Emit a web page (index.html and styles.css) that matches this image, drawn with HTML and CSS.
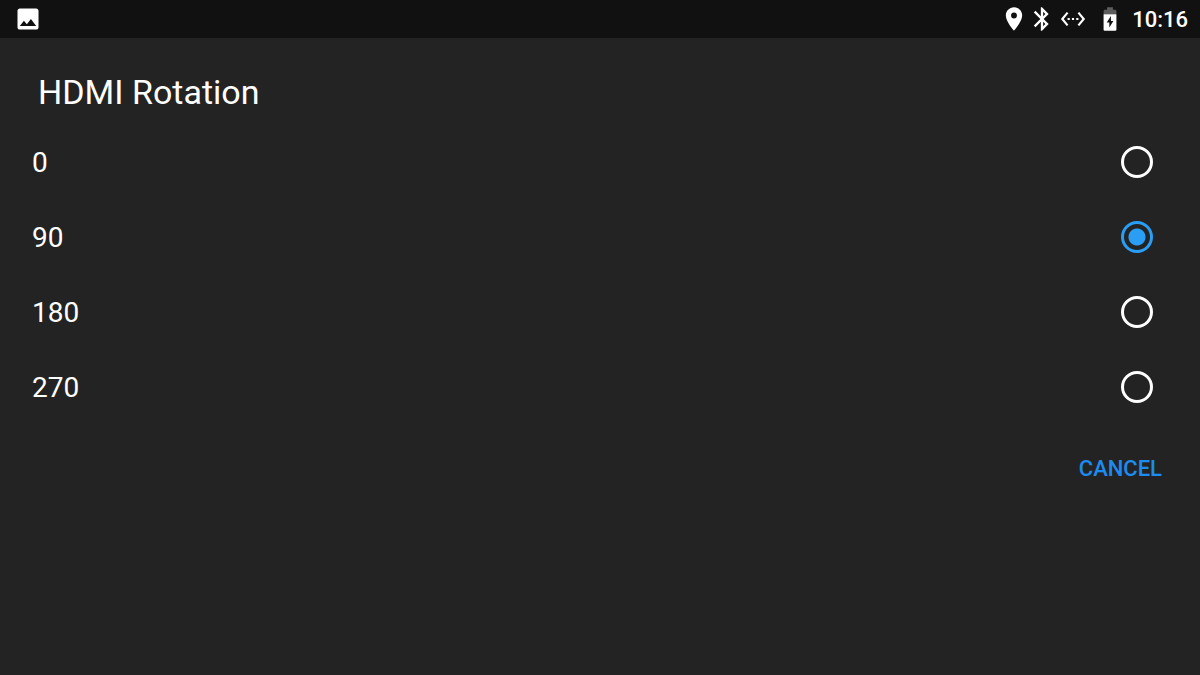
FILE: index.html
```html
<!DOCTYPE html>
<html lang="en">
<head>
<meta charset="utf-8">
<meta name="viewport" content="width=device-width, initial-scale=1">
<title>HDMI Rotation</title>
<link rel="stylesheet" href="styles.css">
</head>
<body>
<header class="status-bar">
  <svg class="icon" viewBox="0 0 24 24" role="img" aria-label="Screenshot saved"><path d="M21 19V5c0-1.100-.9-2-2-2H5c-1.100 0-2 .9-2 2v14c0 1.100.9 2 2 2h14c1.100 0 2-.9 2-2zM8.500 13.500l2.500 3.010L14.500 12l4.500 6H5l3.500-4.500z"/></svg>
  <div class="status-icons">
    <svg class="icon" viewBox="0 0 24 24" role="img" aria-label="Location"><path d="M12 2C8.130 2 5 5.130 5 9c0 5.250 7 13 7 13s7-7.750 7-13c0-3.870-3.130-7-7-7zm0 9.500a2.500 2.500 0 0 1 0-5 2.500 2.500 0 0 1 0 5z"/></svg>
    <svg class="icon" viewBox="0 0 24 24" role="img" aria-label="Bluetooth"><path d="M17.710 7.710L12 2h-1v7.590L6.410 5 5 6.410 10.590 12 5 17.590 6.410 19 11 14.410V22h1l5.710-5.710-4.300-4.290 4.300-4.290zM13 5.830l1.880 1.880L13 9.590V5.830zm1.880 10.460L13 18.170v-3.760l1.880 1.880z"/></svg>
    <svg class="icon ethernet" viewBox="0 0 24 24" role="img" aria-label="Ethernet"><path d="M7.770 6.760L6.230 5.480.82 12l5.410 6.520 1.540-1.280L3.420 12l4.350-5.240zM7 13h2v-2H7v2zm10-2h-2v2h2v-2zm-6 2h2v-2h-2v2zm6.770-7.520l-1.540 1.280L20.580 12l-4.350 5.240 1.540 1.280L23.180 12l-5.410-6.520z"/></svg>
    <svg class="icon" viewBox="0 0 24 24" role="img" aria-label="Battery charging"><path class="battery-empty" d="M16.200 4H14.500V2h-5v2H7.800C7 4 6.500 4.600 6.500 5.300V8h11V5.300C17.500 4.600 17 4 16.200 4z"/><path d="M6.500 8h11v13.200c0 .4-.4.800-.8.800H7.300c-.4 0-.8-.4-.8-.8z"/><path class="bolt" d="M12.800 9.500L9.200 15h2.200v4.200l3.500-5.500h-2.100z"/></svg>
    <time class="clock">10:16</time>
  </div>
</header>
<main>
  <form class="dialog">
    <fieldset class="options">
      <legend class="title">HDMI Rotation</legend>
      <label class="option"><span class="option-text">0</span><input class="radio" type="radio" name="rotation" value="0"></label>
      <label class="option"><span class="option-text">90</span><input class="radio" type="radio" name="rotation" value="90" checked></label>
      <label class="option"><span class="option-text">180</span><input class="radio" type="radio" name="rotation" value="180"></label>
      <label class="option"><span class="option-text">270</span><input class="radio" type="radio" name="rotation" value="270"></label>
    </fieldset>
    <div class="actions"><button class="cancel" type="button">CANCEL</button></div>
  </form>
</main>
</body>
</html>
```
FILE: styles.css
```css
* {
  box-sizing: border-box;
}

body {
  margin: 0;
  min-height: 100vh;
  background: #232323;
  color: #fff;
  font-family: Roboto, "Liberation Sans", sans-serif;
}

.status-bar {
  display: flex;
  align-items: center;
  justify-content: space-between;
  height: 38px;
  padding: 0 12px 0 14px;
  background: #111;
}

.status-icons {
  display: flex;
  align-items: center;
}

.icon {
  display: block;
  width: 28px;
  height: 28px;
  fill: #fff;
}

.ethernet {
  width: 26px;
  margin: 0 10px 0 4px;
}

.battery-empty {
  fill: #5c5c5c;
}

.bolt {
  fill: #111;
}

.clock {
  margin-left: 8px;
  padding-top: 2px;
  font-size: 22px;
  font-weight: 500;
  line-height: 28px;
}

.dialog {
  padding-top: 28px;
}

.options {
  margin: 0;
  padding: 0;
  border: 0;
}

.title {
  padding: 2px 38px 8px;
  font-size: 34px;
  line-height: 48px;
}

.option {
  display: flex;
  align-items: center;
  justify-content: space-between;
  height: 75px;
  padding: 0 47px 0 32px;
  font-size: 28px;
}

.option-text {
  padding-top: 2px;
}

.radio {
  appearance: none;
  width: 32px;
  height: 32px;
  margin: 0;
  border: 3px solid #fff;
  border-radius: 50%;
}

.radio:checked {
  border-color: #2a9df4;
  background: radial-gradient(circle, #2a9df4 8px, transparent 9px);
}

.actions {
  display: flex;
  justify-content: flex-end;
  padding: 21px 26px;
}

.cancel {
  padding: 10px 12px;
  border: 0;
  background: none;
  color: #1c8cf0;
  font: 500 22px/28px Roboto, "Liberation Sans", sans-serif;
}
```
